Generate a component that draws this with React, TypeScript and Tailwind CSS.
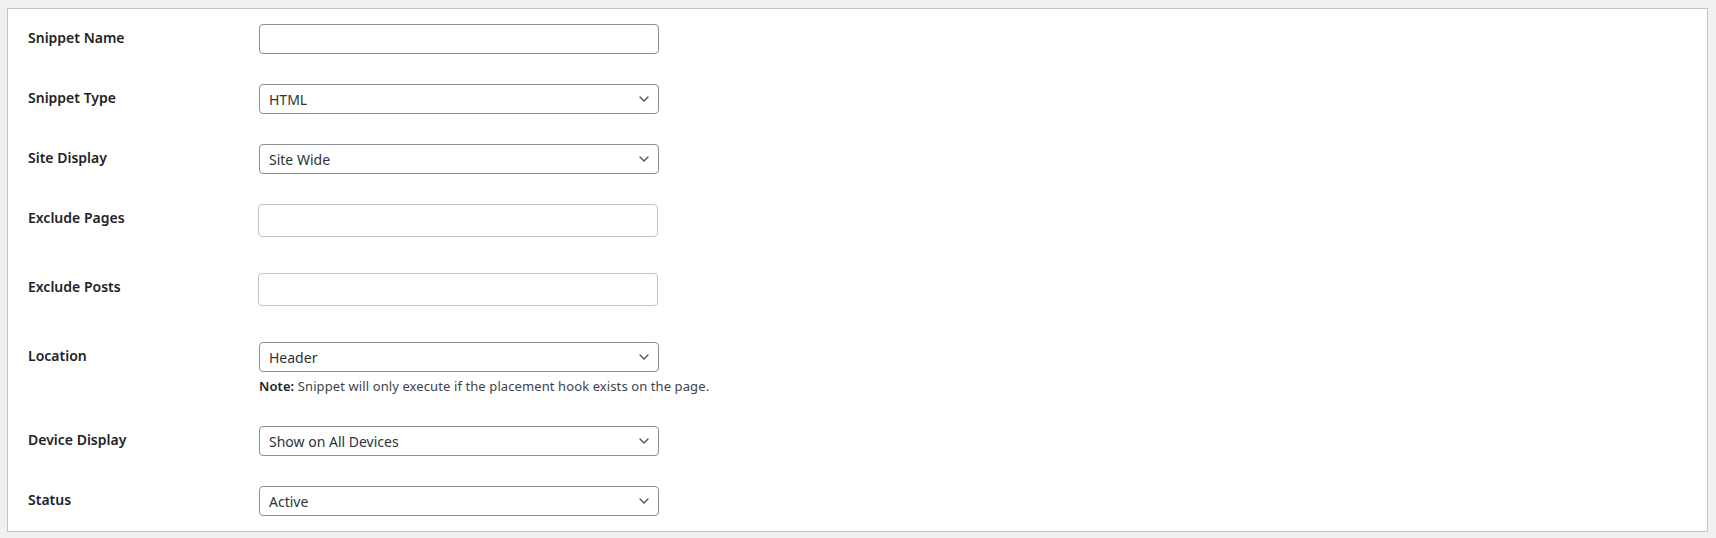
import React from "react";

const font = { fontFamily: '"Noto Sans", "Liberation Sans", sans-serif' };

function Chevron() {
  return (
    <svg
      className="pointer-events-none absolute right-[9px] top-1/2 -translate-y-1/2"
      width="10"
      height="6"
      viewBox="0 0 10 6"
      fill="none"
    >
      <path d="M1 1l4 4 4-4" stroke="#50575e" strokeWidth="1.4" strokeLinecap="round" strokeLinejoin="round" />
    </svg>
  );
}

function Select({ value }: { value: string }) {
  return (
    <div className="relative h-[30px] w-[400px] rounded-[4px] border border-[#8c8f94] bg-white">
      <div className="flex h-full items-center pl-[9px] text-[14px] text-[#2c3338]">{value}</div>
      <Chevron />
    </div>
  );
}

function TextInput() {
  return <div className="h-[30px] w-[400px] rounded-[4px] border border-[#8c8f94] bg-white" />;
}

function MultiBox() {
  return <div className="-ml-px h-[33px] w-[400px] rounded-[4px] border border-[#c3c4c7] bg-white" />;
}

function Row({ label, children, tall }: { label: string; children: React.ReactNode; tall?: boolean }) {
  return (
    <div className={`flex ${tall ? "min-h-[69px]" : "min-h-[60px]"}`}>
      <div className="w-[231px] shrink-0 pt-[20px] text-[14px] font-semibold leading-[18px] text-[#1d2327]">
        {label}
      </div>
      <div className="pt-[15px] pb-[15px]">{children}</div>
    </div>
  );
}

export default function App() {
  return (
    <div className="min-h-[538px] w-full bg-[#f0f0f1] pl-[7px] pr-[8px] pt-[8px]" style={font}>
      <div className="border border-[#c3c4c7] bg-white pl-[20px]">
        <Row label="Snippet Name">
          <TextInput />
        </Row>
        <Row label="Snippet Type">
          <Select value="HTML" />
        </Row>
        <Row label="Site Display">
          <Select value="Site Wide" />
        </Row>
        <Row label="Exclude Pages" tall>
          <MultiBox />
        </Row>
        <Row label="Exclude Posts" tall>
          <MultiBox />
        </Row>
        <Row label="Location">
          <Select value="Header" />
          <p className="mt-[4px] text-[13px] leading-[20px] tracking-[0.1px] text-[#3c434a]">
            <span className="font-semibold text-[#1d2327]">Note:</span> Snippet will only execute if the placement hook
            exists on the page.
          </p>
        </Row>
        <Row label="Device Display">
          <Select value="Show on All Devices" />
        </Row>
        <Row label="Status">
          <Select value="Active" />
        </Row>
      </div>
    </div>
  );
}
